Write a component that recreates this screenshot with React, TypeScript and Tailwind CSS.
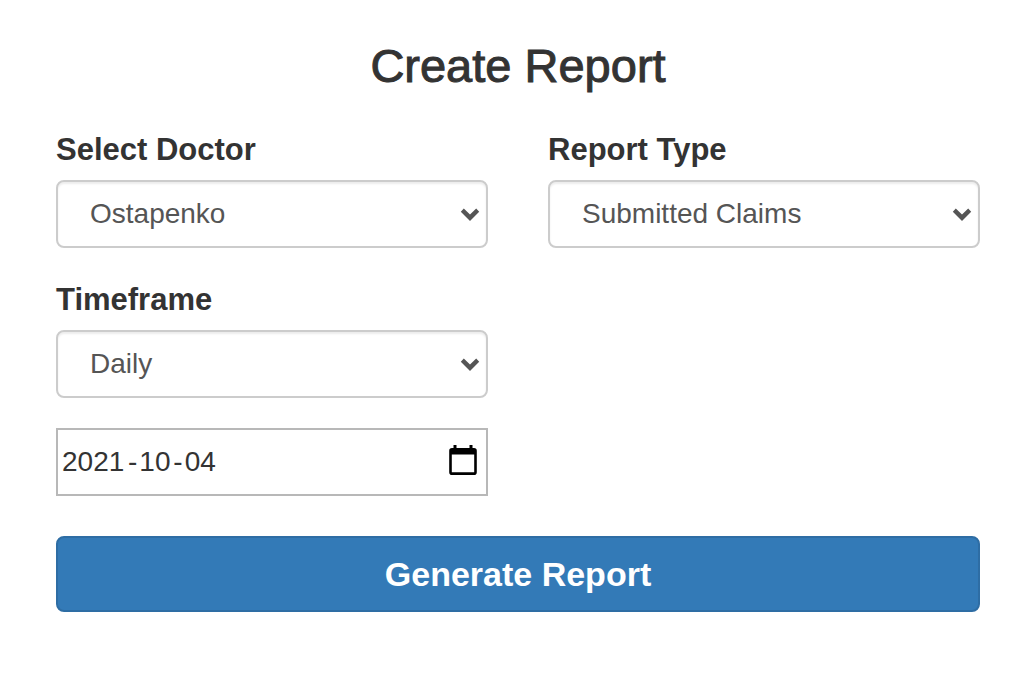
import { useState } from "react";

function ChevronIcon() {
  return (
    <svg
      aria-hidden="true"
      viewBox="0 0 20 14"
      className="pointer-events-none absolute top-7 right-2 h-[14px] w-5"
      fill="#555555"
    >
      <path d="M.8 3.8 3.8.6 10 6.6 16.2.6 19.2 3.8 10 13Z" />
    </svg>
  );
}

function CalendarIcon() {
  return (
    <svg aria-hidden="true" viewBox="0 0 28 30" className="h-[30px] w-7" fill="#000000">
      <path
        fillRule="evenodd"
        d="M4.5 0h3v3h13V0h3v3H25a2.8 2.8 0 0 1 2.8 2.8v21.4A2.8 2.8 0 0 1 25 30H3a2.8 2.8 0 0 1-2.8-2.8V5.8A2.8 2.8 0 0 1 3 3h1.5ZM2.8 9.5v17.8h22.4V9.5Z"
      />
    </svg>
  );
}

type SelectFieldProps = {
  id: string;
  label: string;
  options: string[];
};

function SelectField({ id, label, options }: SelectFieldProps) {
  return (
    <div>
      <label htmlFor={id} className="mb-[10px] block text-[31px] leading-[40px] font-bold">
        {label}
      </label>
      <div className="relative">
        <select
          id={id}
          defaultValue={options[0]}
          className="block h-[68px] w-full appearance-none rounded-lg border-2 border-[#cccccc] bg-white px-8 text-[28px] text-[#555555] shadow-[inset_0_2px_2px_rgba(0,0,0,0.075)]"
        >
          {options.map((option) => (
            <option key={option}>{option}</option>
          ))}
        </select>
        <ChevronIcon />
      </div>
    </div>
  );
}

function DateField() {
  const [year, setYear] = useState("2021");
  const [month, setMonth] = useState("10");
  const [day, setDay] = useState("04");

  return (
    <div
      role="group"
      aria-label="Report date"
      className="mt-[30px] flex h-[68px] items-center border-2 border-[#b8b8b8] pr-[9px] pl-1 text-[28px]"
    >
      <input
        aria-label="Year"
        inputMode="numeric"
        maxLength={4}
        value={year}
        onChange={(event) => setYear(event.target.value)}
        className="w-16 bg-transparent outline-none"
      />
      <span className="mx-[2px]">-</span>
      <input
        aria-label="Month"
        inputMode="numeric"
        maxLength={2}
        value={month}
        onChange={(event) => setMonth(event.target.value)}
        className="w-8 bg-transparent outline-none"
      />
      <span className="mx-[2px]">-</span>
      <input
        aria-label="Day"
        inputMode="numeric"
        maxLength={2}
        value={day}
        onChange={(event) => setDay(event.target.value)}
        className="w-8 bg-transparent outline-none"
      />
      <button type="button" aria-label="Open calendar" className="mb-1 ml-auto">
        <CalendarIcon />
      </button>
    </div>
  );
}

export default function App() {
  return (
    <main className="min-h-screen bg-white pt-9 pr-[54px] pb-19 pl-14 font-['Liberation_Sans',Arial,sans-serif] text-[#333333]">
      <h1 className="text-center text-[47px] leading-[60px] font-medium [-webkit-text-stroke:1px_#333333]">
        Create Report
      </h1>
      <form onSubmit={(event) => event.preventDefault()} className="mt-[34px]">
        <div className="grid grid-cols-2 gap-x-[60px] gap-y-8">
          <SelectField id="doctor" label="Select Doctor" options={["Ostapenko"]} />
          <SelectField id="type" label="Report Type" options={["Submitted Claims"]} />
          <div>
            <SelectField id="timeframe" label="Timeframe" options={["Daily", "Weekly", "Monthly"]} />
            <DateField />
          </div>
        </div>
        <button
          type="submit"
          className="mt-10 block h-[76px] w-full rounded-lg border-2 border-[#2e6da4] bg-[#337ab7] text-[34px] font-bold text-white"
        >
          Generate Report
        </button>
      </form>
    </main>
  );
}
